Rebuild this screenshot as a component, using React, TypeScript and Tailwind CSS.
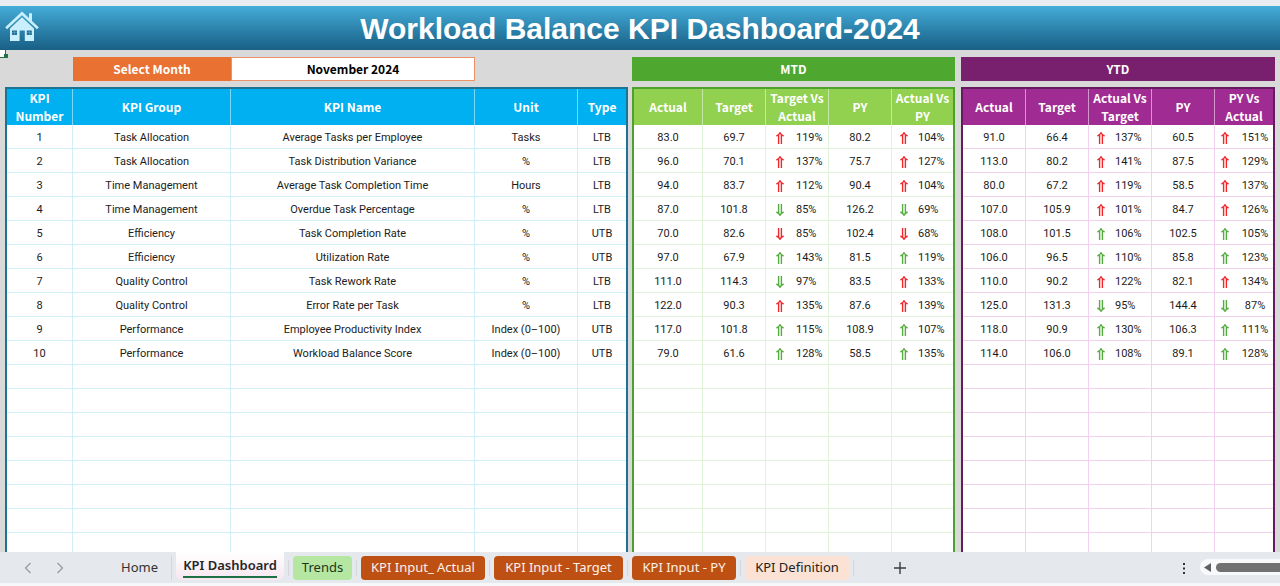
import clsx from "clsx";

type Trend = "up-bad" | "down-bad" | "up-good" | "down-good";
type Score = [string, string, string, Trend, string, string, Trend];

interface Kpi {
  group: string;
  name: string;
  unit: string;
  type: string;
  mtd: Score;
  ytd: Score;
}

const KPIS: Kpi[] = [
  {
    group: "Task Allocation", name: "Average Tasks per Employee", unit: "Tasks", type: "LTB",
    mtd: ["83.0", "69.7", "119%", "up-bad", "80.2", "104%", "up-bad"],
    ytd: ["91.0", "66.4", "137%", "up-bad", "60.5", "151%", "up-bad"],
  },
  {
    group: "Task Allocation", name: "Task Distribution Variance", unit: "%", type: "LTB",
    mtd: ["96.0", "70.1", "137%", "up-bad", "75.7", "127%", "up-bad"],
    ytd: ["113.0", "80.2", "141%", "up-bad", "87.5", "129%", "up-bad"],
  },
  {
    group: "Time Management", name: "Average Task Completion Time", unit: "Hours", type: "LTB",
    mtd: ["94.0", "83.7", "112%", "up-bad", "90.4", "104%", "up-bad"],
    ytd: ["80.0", "67.2", "119%", "up-bad", "58.5", "137%", "up-bad"],
  },
  {
    group: "Time Management", name: "Overdue Task Percentage", unit: "%", type: "LTB",
    mtd: ["87.0", "101.8", "85%", "down-good", "126.2", "69%", "down-good"],
    ytd: ["107.0", "105.9", "101%", "up-bad", "84.7", "126%", "up-bad"],
  },
  {
    group: "Efficiency", name: "Task Completion Rate", unit: "%", type: "UTB",
    mtd: ["70.0", "82.6", "85%", "down-bad", "102.4", "68%", "down-bad"],
    ytd: ["108.0", "101.5", "106%", "up-good", "102.5", "105%", "up-good"],
  },
  {
    group: "Efficiency", name: "Utilization Rate", unit: "%", type: "UTB",
    mtd: ["97.0", "67.9", "143%", "up-good", "81.5", "119%", "up-good"],
    ytd: ["106.0", "96.5", "110%", "up-good", "85.8", "123%", "up-good"],
  },
  {
    group: "Quality Control", name: "Task Rework Rate", unit: "%", type: "LTB",
    mtd: ["111.0", "114.3", "97%", "down-good", "83.5", "133%", "up-bad"],
    ytd: ["110.0", "90.2", "122%", "up-bad", "82.1", "134%", "up-bad"],
  },
  {
    group: "Quality Control", name: "Error Rate per Task", unit: "%", type: "LTB",
    mtd: ["122.0", "90.3", "135%", "up-bad", "87.6", "139%", "up-bad"],
    ytd: ["125.0", "131.3", "95%", "down-good", "144.4", "87%", "down-good"],
  },
  {
    group: "Performance", name: "Employee Productivity Index", unit: "Index (0–100)", type: "UTB",
    mtd: ["117.0", "101.8", "115%", "up-good", "108.9", "107%", "up-good"],
    ytd: ["118.0", "90.9", "130%", "up-good", "106.3", "111%", "up-good"],
  },
  {
    group: "Performance", name: "Workload Balance Score", unit: "Index (0–100)", type: "UTB",
    mtd: ["79.0", "61.6", "128%", "up-good", "58.5", "135%", "up-good"],
    ytd: ["114.0", "106.0", "108%", "up-good", "89.1", "128%", "up-good"],
  },
];

const ROWS = Array.from({ length: 18 }, (_, i) => KPIS[i]);

function TrendArrow({ trend }: { trend: Trend }) {
  return (
    <svg
      viewBox="0 0 8 12"
      className={clsx(
        "h-3 w-2 shrink-0",
        trend.endsWith("bad") ? "text-[#f0282d]" : "text-[#55ac40]",
        trend.startsWith("down") && "rotate-180",
      )}
      fill="none"
      stroke="currentColor"
      strokeWidth="1.4"
    >
      <path d="M0.4 4 C2 3.2 3.3 2.1 4 0.7 C4.7 2.1 6 3.2 7.6 4" />
      <path d="M2.6 2.6V12M5.4 2.6V12" />
    </svg>
  );
}

function HomeIcon() {
  return (
    <svg viewBox="0 0 34 31" className="h-[31px] w-[34px]" fill="#c9effc">
      <path d="M17 0.5 24 7V2.3h3V10l6.8 6.3-1.8 2L17 4.2 2 18.3l-1.8-2z" />
      <path d="M17 6.3 29 17.5V30H19.8V19.5H14.6V30H5V17.5z" />
      <path d="M7 19.5h5v4.5H7zM21.8 19.5h5v4.5h-5z" fill="#237199" />
      <path d="M9.2 19.5h.6v4.5h-.6zM7 21.5h5v.6H7zM24 19.5h.6v4.5H24zM21.8 21.5h5v.6h-5z" fill="#5fa9c9" />
    </svg>
  );
}

interface SheetTableProps {
  label: string;
  cols: string[];
  heads: string[];
  frame: string;
  head: string;
  headLine: string;
  line: string;
  rows: React.ReactNode[][];
}

function SheetTable({ label, cols, heads, frame, head, headLine, line, rows }: SheetTableProps) {
  return (
    <div className={clsx("mt-1.5 border-2 bg-white", frame)}>
      <table aria-label={label} className="w-full table-fixed border-separate border-spacing-0 text-center">
        <colgroup>
          {cols.map((c, i) => (
            <col key={i} className={c} />
          ))}
        </colgroup>
        <thead>
          <tr className={clsx("h-9 text-xs leading-[18px] text-white", head)}>
            {heads.map((h, i) => (
              <th key={i} className={clsx("p-0 font-bold", i < heads.length - 1 && "border-r", headLine)}>
                {h}
              </th>
            ))}
          </tr>
        </thead>
        <tbody>
          {rows.map((cells, r) => (
            <tr key={r} className="h-6 font-['Roboto',sans-serif] text-[11px] leading-4 text-[#1c1c1c]">
              {cells.map((cell, i) => (
                <td
                  key={i}
                  className={clsx("border-b p-0 pt-0.5 whitespace-nowrap", i < cells.length - 1 && "border-r", line)}
                >
                  {cell}
                </td>
              ))}
            </tr>
          ))}
        </tbody>
      </table>
    </div>
  );
}

function Change({ value, trend, className, centered }: {
  value: string;
  trend: Trend;
  className: string;
  centered?: boolean;
}) {
  return (
    <div className={clsx("flex items-center", className)}>
      <TrendArrow trend={trend} />
      <span className={clsx(centered && "flex-1 text-center")}>{value}</span>
    </div>
  );
}

function scoreRows(period: "mtd" | "ytd") {
  const mtd = period === "mtd";
  return ROWS.map((kpi) => {
    if (!kpi) return ["", "", "", "", ""];
    const [actual, target, vsTarget, targetTrend, py, vsPy, pyTrend] = kpi[period];
    return [
      actual,
      target,
      <Change value={vsTarget} trend={targetTrend} className={mtd ? "gap-3 pl-2.5" : "gap-2.5 pl-2"} />,
      py,
      <Change
        value={vsPy}
        trend={pyTrend}
        centered={!mtd}
        className={mtd ? "gap-2.5 pl-2" : "gap-2 pl-1.5"}
      />,
    ];
  });
}

const TABS = [
  { name: "Trends", className: "w-[59px] bg-[#b5e6a2] text-[#23351c]" },
  { name: "KPI Input_ Actual", className: "w-[124px] bg-[#be5014] text-[#fdf0e8]" },
  { name: "KPI Input - Target", className: "w-[129px] bg-[#be5014] text-[#fdf0e8]" },
  { name: "KPI Input - PY", className: "w-[104px] bg-[#be5014] text-[#fdf0e8]" },
  { name: "KPI Definition", className: "w-[104px] bg-[#fbe2d5] text-[#222222]" },
];

function SheetTabs() {
  return (
    <footer className="shrink-0 bg-[#f7f8fa] pb-[3px] font-['Noto_Sans',sans-serif] text-[13px]">
      <div className="flex h-[31px] items-start bg-[#e5e8ed]">
        <div className="flex h-[31px] w-[108px] shrink-0 items-center gap-5 pl-[22px] text-[#9a9da2]">
          <button aria-label="Previous sheet" className="flex h-5 w-3 items-center justify-center">
            <svg viewBox="0 0 8 12" className="h-3 w-2" fill="none" stroke="currentColor" strokeWidth="1.3">
              <path d="M6.5 1 1.5 6l5 5" />
            </svg>
          </button>
          <button aria-label="Next sheet" className="flex h-5 w-3 items-center justify-center">
            <svg viewBox="0 0 8 12" className="h-3 w-2" fill="none" stroke="currentColor" strokeWidth="1.3">
              <path d="M1.5 1l5 5-5 5" />
            </svg>
          </button>
        </div>
        <button className="mt-1 h-6 w-[64px] shrink-0 border-r border-[#d3d6db] text-[#333333]">Home</button>
        <button className="ml-1 h-7 w-[108px] shrink-0 rounded-b-md bg-linear-to-b from-white to-[#f7e6f1] text-[#262626]">
          <span className="inline-block border-b-2 border-[#1e7145] leading-[22px] font-semibold whitespace-nowrap">
            KPI Dashboard
          </span>
        </button>
        <div className="mt-1 ml-1 flex">
          {TABS.map((tab) => (
            <div key={tab.name} className="flex h-6 shrink-0">
              <span className="my-1 mr-1 w-px bg-[#d3d6db]" />
              <button className={clsx("mr-1 rounded whitespace-nowrap", tab.className)}>{tab.name}</button>
            </div>
          ))}
          <span className="my-1 w-px bg-[#d3d6db]" />
        </div>
        <button aria-label="New sheet" className="mt-2 ml-[38px] flex h-[15px] w-4 items-center justify-center text-[#3c3c3c]">
          <svg viewBox="0 0 12 12" className="h-3 w-3" fill="none" stroke="currentColor" strokeWidth="1.4">
            <path d="M6 0v12M0 6h12" />
          </svg>
        </button>
        <button aria-label="Resize tabs" className="mt-2.5 mr-3 ml-auto flex h-3 w-2 items-center justify-center text-[#333333]">
          <svg viewBox="0 0 2 11" className="h-[11px] w-0.5" fill="currentColor">
            <path d="M0 0h2v2H0zM0 4.5h2v2H0zM0 9h2v2H0z" />
          </svg>
        </button>
        <div className="mt-[7px] flex h-4 w-20 shrink-0 items-center gap-[5px] rounded-l-full bg-[#f8f9fa] pl-1">
          <button aria-label="Scroll left" className="text-[#606060]">
            <svg viewBox="0 0 7 9" className="h-[9px] w-[7px]" fill="currentColor">
              <path d="M7 0v9L0 4.5z" />
            </svg>
          </button>
          <div className="h-[9px] flex-1 rounded-l-full bg-[#717171]" />
        </div>
      </div>
    </footer>
  );
}

export default function App() {
  return (
    <div className="flex h-screen flex-col overflow-hidden bg-[#d9d9d9] font-['Noto_Sans_CJK_SC',sans-serif]">
      <header className="relative shrink-0 border-t-6 border-[#e8ecf1] bg-linear-to-b from-[#44add9] to-[#185f85]">
        <div className="flex h-11 items-center justify-center">
          <a href="#home" aria-label="Home" className="absolute top-[5px] left-[5px]">
            <HomeIcon />
          </a>
          <h1 className="pt-0.5 font-['Liberation_Sans',sans-serif] text-[30px] leading-9 font-bold text-white">
            Workload Balance KPI Dashboard-2024
          </h1>
        </div>
        {/* corner of the selected cell */}
        <div className="absolute top-11 left-0 h-2 w-1.5 border-r border-b border-[#217346] bg-white" />
        <div className="absolute top-12 left-1 h-1 w-1 bg-[#217346]" />
      </header>

      <main className="grid min-h-0 flex-1 grid-cols-[623fr_323fr_316fr] gap-x-1 overflow-hidden px-[5px] pt-[7px]">
        <section>
          <div className="grid h-6 grid-cols-[68fr_158fr_244fr_153fr] text-xs font-bold">
            <label
              htmlFor="month"
              className="col-start-2 flex items-center justify-center bg-[#e97132] text-white"
            >
              Select Month
            </label>
            <select
              id="month"
              defaultValue="November 2024"
              className="appearance-none border border-[#ec9465] bg-white text-center text-black [text-align-last:center]"
            >
              <option>November 2024</option>
              <option>December 2024</option>
            </select>
          </div>
          <SheetTable
            label="KPIs"
            cols={["w-[66px]", "w-[158px]", "w-auto", "w-[103px]", "w-[48px]"]}
            heads={["KPI Number", "KPI Group", "KPI Name", "Unit", "Type"]}
            frame="border-[#1d7391]"
            head="bg-[#00b0f0]"
            headLine="border-[#7fd7f7]"
            line="border-[#d0eff8]"
            rows={ROWS.map((kpi, i) => (kpi ? [i + 1, kpi.group, kpi.name, kpi.unit, kpi.type] : ["", "", "", "", ""]))}
          />
        </section>

        <section>
          <h2 className="flex h-6 items-center justify-center bg-[#4ea72e] text-xs font-bold text-white">MTD</h2>
          <SheetTable
            label="MTD"
            cols={["w-[69px]", "w-[63px]", "w-[63px]", "w-[63px]", "w-auto"]}
            heads={["Actual", "Target", "Target Vs Actual", "PY", "Actual Vs PY"]}
            frame="border-[#4ea02f]"
            head="bg-[#92d050]"
            headLine="border-[#c6e8a6]"
            line="border-[#def3d8]"
            rows={scoreRows("mtd")}
          />
        </section>

        <section className="pl-0.5">
          <h2 className="flex h-6 items-center justify-center bg-[#78206e] text-xs font-bold text-white">YTD</h2>
          <SheetTable
            label="YTD"
            cols={["w-[63px]", "w-[63px]", "w-[63px]", "w-[63px]", "w-auto"]}
            heads={["Actual", "Target", "Actual Vs Target", "PY", "PY Vs Actual"]}
            frame="border-[#651c5e]"
            head="bg-[#a02b93]"
            headLine="border-[#d595cd]"
            line="border-[#f2d0ef]"
            rows={scoreRows("ytd")}
          />
        </section>
      </main>

      <SheetTabs />
    </div>
  );
}
